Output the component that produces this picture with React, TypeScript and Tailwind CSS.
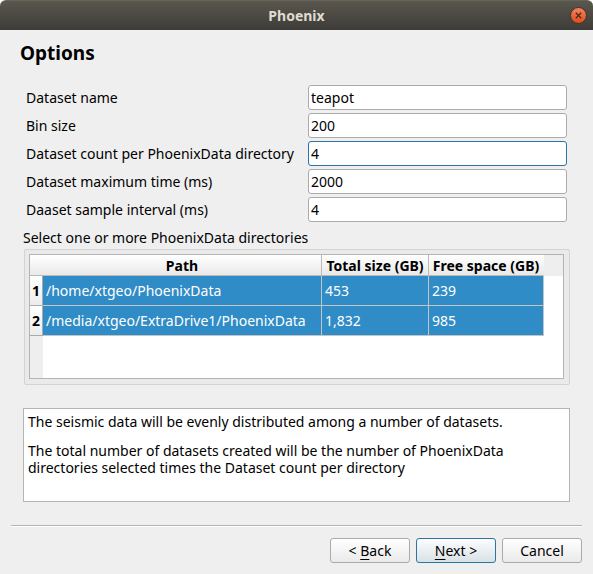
import React, { useState } from "react";

const fields = [
  { id: "name", label: "Dataset name", value: "teapot" },
  { id: "bin", label: "Bin size", value: "200" },
  { id: "count", label: "Dataset count per PhoenixData directory", value: "4", active: true },
  { id: "time", label: "Dataset maximum time (ms)", value: "2000" },
  { id: "interval", label: "Daaset sample interval (ms)", value: "4" },
];

const directories = [
  { path: "/home/xtgeo/PhoenixData", total: "453", free: "239" },
  { path: "/media/xtgeo/ExtraDrive1/PhoenixData", total: "1,832", free: "985" },
];

const headCell =
  "h-[21px] border-r border-b border-[#b9b9b9] bg-linear-to-b from-white to-[#e9e9e9] p-0 text-center font-bold whitespace-nowrap";
const bodyCell = "h-[30px] border-r border-b border-[#c4c4c4] p-0 pl-[3px] whitespace-nowrap";
const button =
  "h-[25px] w-20 rounded-[3px] border bg-linear-to-b whitespace-nowrap";

function TitleBar() {
  return (
    <header className="grid h-[30px] shrink-0 grid-cols-[1fr_auto_1fr] items-center rounded-t-[6px] border-t border-[#66645a] bg-linear-to-b from-[#5a574d] to-[#3d3c38] px-1.5">
      <h1 className="col-start-2 font-bold text-[#dfdbd2]">Phoenix</h1>
      <button type="button" aria-label="Close" className="justify-self-end">
        <svg width="17" height="17" viewBox="0 0 17 17" className="block">
          <defs>
            <linearGradient id="close" x1="0" y1="0" x2="0" y2="1">
              <stop offset="0" stopColor="#f4845f" />
              <stop offset="1" stopColor="#df4b18" />
            </linearGradient>
          </defs>
          <circle cx="8.5" cy="8.5" r="8" fill="url(#close)" stroke="#35342f" />
          <path d="M5.8 5.8l5.4 5.4M11.2 5.8l-5.4 5.4" stroke="#4a2a1c" strokeWidth="1.3" />
        </svg>
      </button>
    </header>
  );
}

function OptionsForm() {
  const [values, setValues] = useState(fields.map((f) => f.value));
  return (
    <div className="grid grid-cols-[278px_1fr] items-center gap-x-1 gap-y-[3px] px-[3px]">
      {fields.map((f, i) => (
        <React.Fragment key={f.id}>
          <label htmlFor={f.id} className="whitespace-nowrap">
            {f.label}
          </label>
          <input
            id={f.id}
            value={values[i]}
            onChange={(e) => setValues(values.map((v, j) => (j === i ? e.target.value : v)))}
            className={
              "h-[25px] w-full min-w-0 rounded-[3px] border bg-white px-[2px] outline-none " +
              (f.active ? "border-[#2a75a3]" : "border-[#ababab]")
            }
          />
        </React.Fragment>
      ))}
    </div>
  );
}

function DirectoryTable() {
  return (
    <div className="ml-px rounded-[2px] border border-[#d3d3d3] bg-[#eaeaea] pt-1 pr-[5px] pb-[5px] pl-1">
      <div className="h-[125px] border border-[#b4b4b4] bg-white bg-linear-to-r from-[#eeeeee] from-[13px] to-white to-[13px]">
        <div className="bg-[linear-gradient(#eeeeee,#eeeeee)] bg-size-[100%_21px] bg-no-repeat">
          <table className="w-[514px] table-fixed border-separate border-spacing-0">
            <colgroup>
              <col className="w-[13px]" />
              <col className="w-[279px]" />
              <col className="w-[107px]" />
              <col className="w-[115px]" />
            </colgroup>
            <thead>
              <tr>
                <td className="h-[21px] border-b border-[#b9b9b9] bg-linear-to-b from-white to-[#e9e9e9] p-0" />
                <th scope="col" className={headCell}>Path</th>
                <th scope="col" className={headCell}>Total size (GB)</th>
                <th scope="col" className={headCell + " border-r-transparent"}>Free space (GB)</th>
              </tr>
            </thead>
            <tbody>
              {directories.map((d, i) => (
                <tr key={d.path} className="bg-[#308cc6] text-white">
                  <th
                    scope="row"
                    className="h-[30px] border-r border-b border-[#aaaaaa] bg-linear-to-b from-white to-[#ececec] p-0 text-center font-bold text-black"
                  >
                    {i + 1}
                  </th>
                  <td className={bodyCell}>{d.path}</td>
                  <td className={bodyCell}>{d.total}</td>
                  <td className={bodyCell}>{d.free}</td>
                </tr>
              ))}
            </tbody>
          </table>
        </div>
      </div>
    </div>
  );
}

export default function App() {
  return (
    <div className="min-h-screen bg-white font-['Noto_Sans',sans-serif] text-[14px] leading-[17px] text-black">
      <div className="flex min-h-screen flex-col">
        <TitleBar />
        <main className="flex grow flex-col bg-[#efefef] px-[11px] pb-[11px]">
          <h2 className="mt-[11px] pl-[9px] text-[19px] leading-6 font-bold">Options</h2>
          <section className="mt-5 px-3">
            <OptionsForm />
            <p className="mt-[7px] mb-[3px]">Select one or more PhoenixData directories</p>
            <DirectoryTable />
            <div className="mt-[23px] min-h-[94px] border border-[#b4b4b4] bg-white p-1">
              <p>The seismic data will be evenly distributed among a number of datasets.</p>
              <p className="mt-3">
                The total number of datasets created will be the number of PhoenixData directories
                selected times the Dataset count per directory
              </p>
            </div>
          </section>
          <footer className="mt-auto flex justify-end gap-1.5 border-t border-[#b4b4b4] pt-3 shadow-[inset_0_1px_0_#ffffff]">
            <button type="button" className={button + " border-[#ababab] from-white to-[#eaeaea]"}>
              &lt; <span className="underline underline-offset-3">B</span>ack
            </button>
            <button type="button" className={button + " border-[#2a75a3] from-[#fcfdfe] to-[#d9e1e6]"}>
              <span className="underline underline-offset-3">N</span>ext &gt;
            </button>
            <button type="button" className={button + " border-[#ababab] from-white to-[#eaeaea]"}>
              Cancel
            </button>
          </footer>
        </main>
      </div>
    </div>
  );
}
